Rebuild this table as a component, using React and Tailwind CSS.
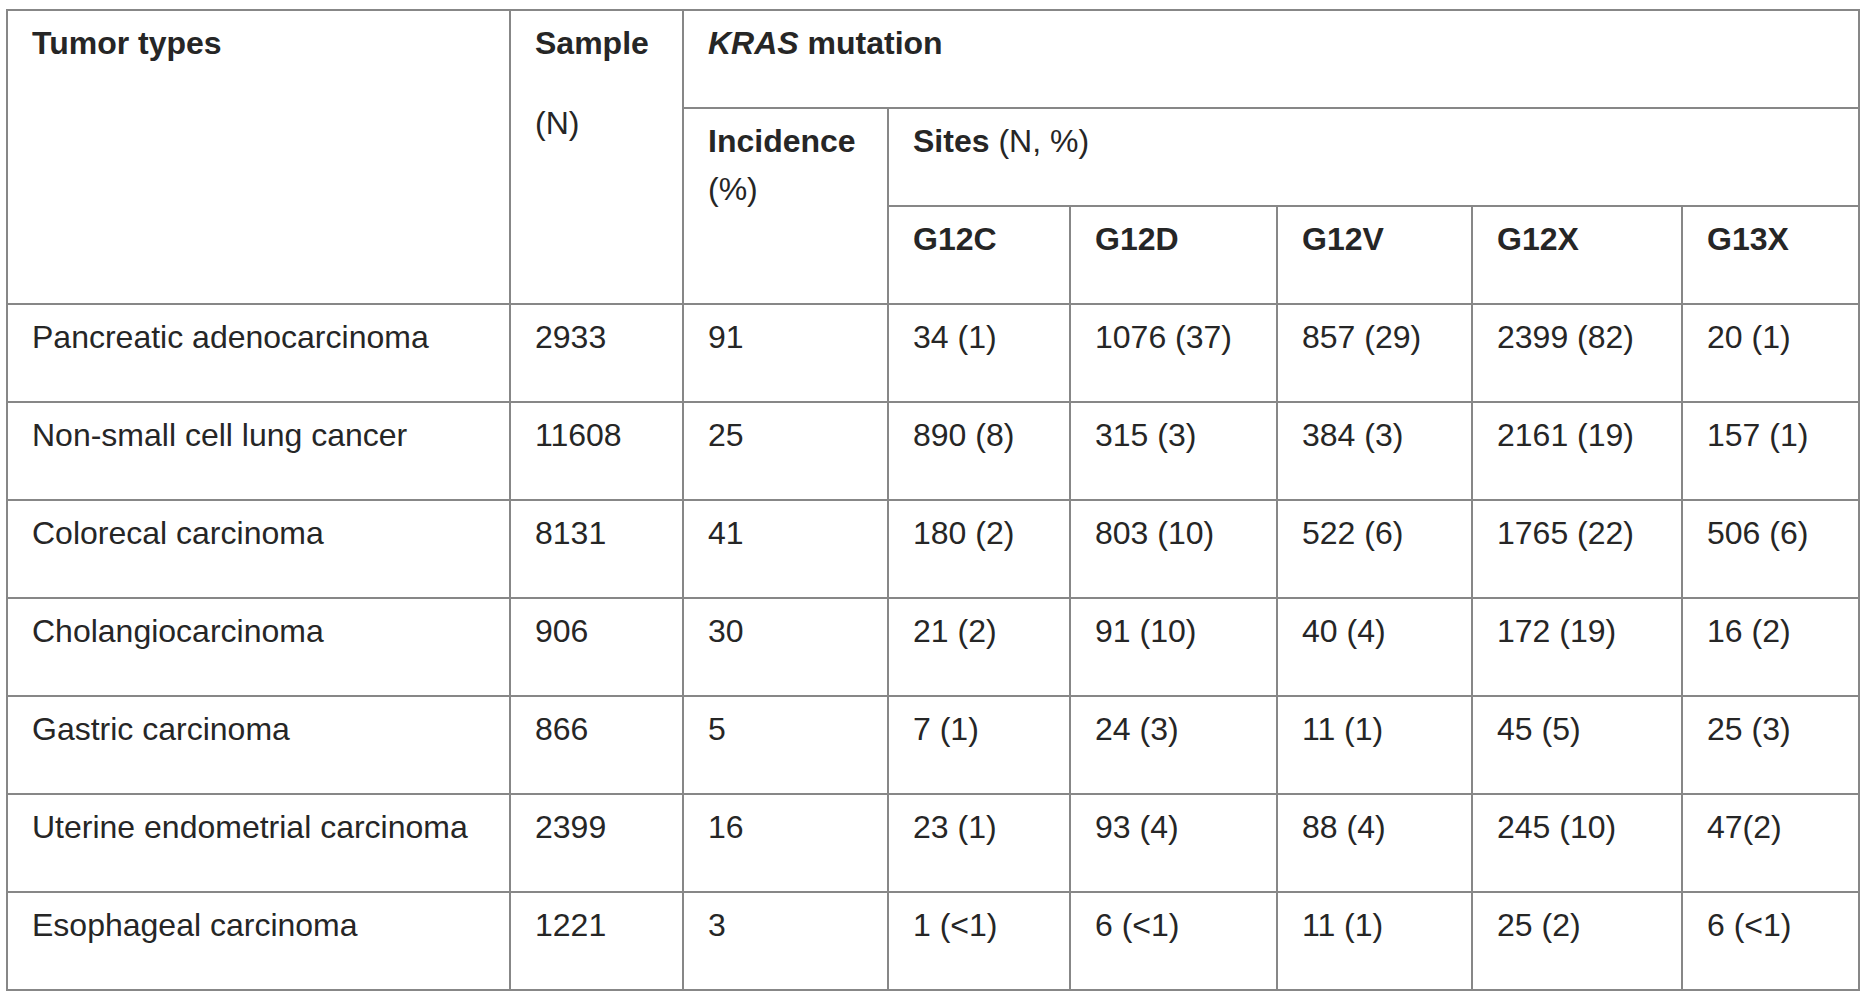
const ROWS = [
  ['Pancreatic adenocarcinoma', '2933', '91', '34 (1)', '1076 (37)', '857 (29)', '2399 (82)', '20 (1)'],
  ['Non-small cell lung cancer', '11608', '25', '890 (8)', '315 (3)', '384 (3)', '2161 (19)', '157 (1)'],
  ['Colorecal carcinoma', '8131', '41', '180 (2)', '803 (10)', '522 (6)', '1765 (22)', '506 (6)'],
  ['Cholangiocarcinoma', '906', '30', '21 (2)', '91 (10)', '40 (4)', '172 (19)', '16 (2)'],
  ['Gastric carcinoma', '866', '5', '7 (1)', '24 (3)', '11 (1)', '45 (5)', '25 (3)'],
  ['Uterine endometrial carcinoma', '2399', '16', '23 (1)', '93 (4)', '88 (4)', '245 (10)', '47(2)'],
  ['Esophageal carcinoma', '1221', '3', '1 (<1)', '6 (<1)', '11 (1)', '25 (2)', '6 (<1)'],
];

const SITES = ['G12C', 'G12D', 'G12V', 'G12X', 'G13X'];
const WIDTHS = [503, 173, 205, 182, 207, 195, 210, 177];

const cell = 'border-2 border-[#878787] px-6 pt-2 pb-10 align-top text-left';

export default function App() {
  return (
    <div className="min-h-screen bg-white pl-[6px] pt-[9px] font-['Liberation_Sans',Arial,sans-serif] text-[32px] leading-[48px] text-[#262626]">
      <table className="w-[1852px] table-fixed border-collapse">
        <colgroup>
          {WIDTHS.map((w, i) => (
            <col key={i} style={{ width: w }} />
          ))}
        </colgroup>
        <thead>
          <tr>
            <th rowSpan={3} className={`${cell} font-bold`}>
              Tumor types
            </th>
            <th rowSpan={3} className={`${cell} font-bold`}>
              <div className="mb-8">Sample</div>
              <div className="font-normal">(N)</div>
            </th>
            <th colSpan={6} className={`${cell} font-bold`}>
              <i>KRAS</i> mutation
            </th>
          </tr>
          <tr>
            <th rowSpan={2} className={`${cell} font-bold`}>
              Incidence
              <br />
              <span className="font-normal">(%)</span>
            </th>
            <th colSpan={5} className={`${cell} font-bold`}>
              Sites <span className="font-normal">(N, %)</span>
            </th>
          </tr>
          <tr>
            {SITES.map((s) => (
              <th key={s} className={`${cell} font-bold`}>
                {s}
              </th>
            ))}
          </tr>
        </thead>
        <tbody>
          {ROWS.map((r) => (
            <tr key={r[0]}>
              {r.map((v, i) => (
                <td key={i} className={`${cell} whitespace-nowrap`}>
                  {v}
                </td>
              ))}
            </tr>
          ))}
        </tbody>
      </table>
    </div>
  );
}
